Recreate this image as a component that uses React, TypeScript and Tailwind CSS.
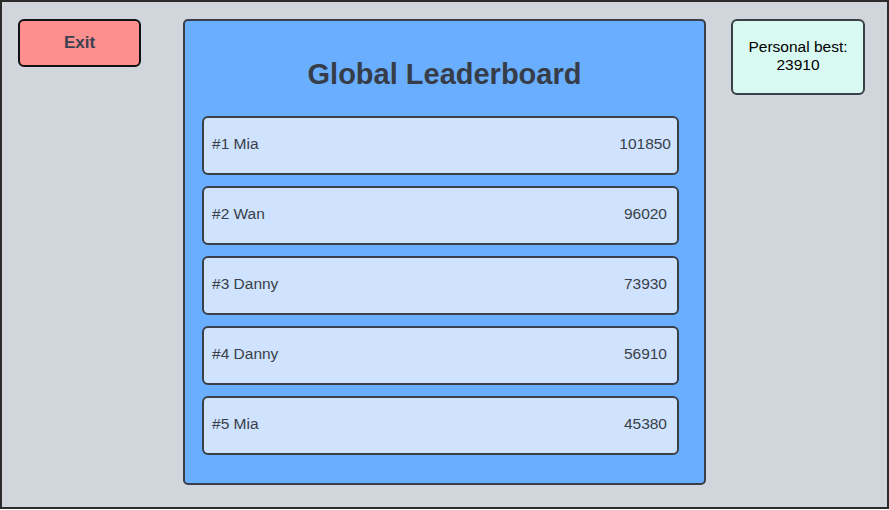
const scores = [
  { rank: 1, name: 'Mia', score: 101850, pr: 'pr-[6px]' },
  { rank: 2, name: 'Wan', score: 96020, pr: 'pr-[10px]' },
  { rank: 3, name: 'Danny', score: 73930, pr: 'pr-[10px]' },
  { rank: 4, name: 'Danny', score: 56910, pr: 'pr-[10px]' },
  { rank: 5, name: 'Mia', score: 45380, pr: 'pr-[10px]' },
];

export default function App() {
  return (
    <div className="w-[889px] h-[509px] bg-[#d1d6dc] border-2 border-[#2b2b2b] font-['Liberation_Sans',Arial,sans-serif]">
      <div className="flex items-start pl-[16px] pt-[17px]">
        {/* Exit */}
        <button className="w-[123px] h-[48px] bg-[#ff8e8e] border-2 border-[#111] rounded-[6px] text-[17px] font-bold text-[#3a4150]">
          Exit
        </button>

        {/* Leaderboard */}
        <div className="ml-[42px] w-[523px] h-[466px] bg-[#6aafff] border-2 border-[#3a3f48] rounded-[5px] pt-[37px]">
          <h1 className="text-center text-[29px] leading-[32px] font-bold text-[#373d48]">
            Global Leaderboard
          </h1>
          <div className="mt-[26px] ml-[17px] flex flex-col gap-[11px]">
            {scores.map((s) => (
              <div
                key={s.rank}
                className={`w-[477px] h-[59px] bg-[#cfe3ff] border-2 border-[#3a3f48] rounded-[6px] flex items-center justify-between pl-[8px] ${s.pr} pb-[4px] text-[15.5px] text-[#3a3f48]`}
              >
                <span>#{s.rank} {s.name}</span>
                <span>{s.score}</span>
              </div>
            ))}
          </div>
        </div>

        {/* Personal best */}
        <div className="ml-[25px] w-[134px] h-[76px] bg-[#d9f9f3] border-2 border-[#3a3f48] rounded-[6px] flex flex-col items-center justify-center pb-[2px] text-[15.5px] leading-[18px] text-black">
          <span>Personal best:</span>
          <span>23910</span>
        </div>
      </div>
    </div>
  );
}
